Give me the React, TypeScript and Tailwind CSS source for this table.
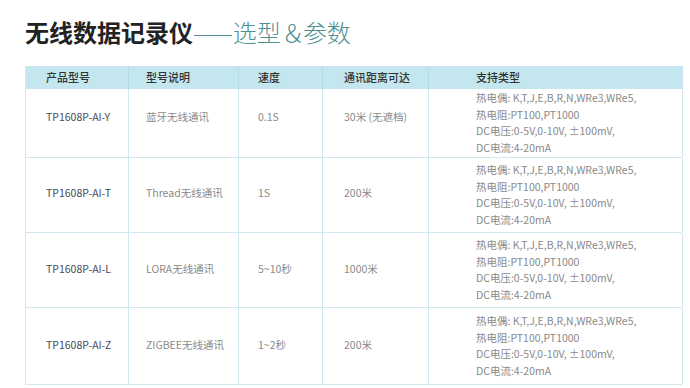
import React from "react";

const spec = [
  "热电偶: K,T,J,E,B,R,N,WRe3,WRe5,",
  "热电阻:PT100,PT1000",
  "DC电压:0-5V,0-10V, ±100mV,",
  "DC电流:4-20mA",
];

const rows = [
  { model: "TP1608P-AI-Y", desc: "蓝牙无线通讯", speed: "0.1S", dist: "30米 (无遮档)", h: "h-[69px]", pad: "pb-[12px]" },
  { model: "TP1608P-AI-T", desc: "Thread无线通讯", speed: "1S", dist: "200米", h: "h-[75px]", pad: "pb-[4px]" },
  { model: "TP1608P-AI-L", desc: "LORA无线通讯", speed: "5~10秒", dist: "1000米", h: "h-[75px]", pad: "pb-[2px]" },
  { model: "TP1608P-AI-Z", desc: "ZIGBEE无线通讯", speed: "1~2秒", dist: "200米", h: "h-[77px]", pad: "pb-[2px]" },
];

const font = { fontFamily: '"Noto Sans CJK SC", "Noto Sans", sans-serif' };

export default function App() {
  return (
    <div className="w-[690px] h-[388px] bg-white overflow-hidden" style={font}>
      <div className="pl-[25px] pt-[14px] h-[66px] text-[24px] leading-[36px] whitespace-nowrap">
        <span className="font-bold text-[#222222]">无线数据记录仪</span>
        <span className="text-[#4f8f93] font-light">——选型</span>
        <span className="text-[#4f8f93] font-light tracking-[-2px]">＆</span>
        <span className="text-[#4f8f93] font-light">参数</span>
      </div>
      <div className="ml-[25px] w-[657px] border-l border-[#cfe8ef] text-[10.5px]">
        <div className="grid grid-cols-[103px_110px_84px_106px_254px] h-[23px] bg-[#c4e6ee] text-[#333333] font-medium text-[11px]">
          <div className="pl-[20px] flex items-center border-r border-[#b5dbe5]">产品型号</div>
          <div className="pl-[17px] flex items-center border-r border-[#b5dbe5]">型号说明</div>
          <div className="pl-[19px] flex items-center border-r border-[#b5dbe5]">速度</div>
          <div className="pl-[21px] flex items-center border-r border-[#b5dbe5]">通讯距离可达</div>
          <div className="pl-[47px] flex items-center border-r border-[#c4e6ee]">支持类型</div>
        </div>
        {rows.map((r) => (
          <div
            key={r.model}
            className={`grid grid-cols-[103px_110px_84px_106px_254px] ${r.h} border-b border-[#cfe8ef]`}
          >
            <div className={`pl-[20px] ${r.pad} flex items-center border-r border-[#cfe8ef] text-[#4a4a55]`}>{r.model}</div>
            <div className={`pl-[17px] ${r.pad} flex items-center border-r border-[#cfe8ef] text-[#8a8a8a]`}>{r.desc}</div>
            <div className={`pl-[19px] ${r.pad} flex items-center border-r border-[#cfe8ef] text-[#8a8a8a]`}>{r.speed}</div>
            <div className={`pl-[21px] ${r.pad} flex items-center border-r border-[#cfe8ef] text-[#8a8a8a]`}>{r.dist}</div>
            <div className="pl-[47px] flex flex-col justify-center border-r border-[#cfe8ef] text-[#8a8a8a] leading-[16.5px]">
              {spec.map((s) => (
                <div key={s}>{s}</div>
              ))}
            </div>
          </div>
        ))}
      </div>
    </div>
  );
}
